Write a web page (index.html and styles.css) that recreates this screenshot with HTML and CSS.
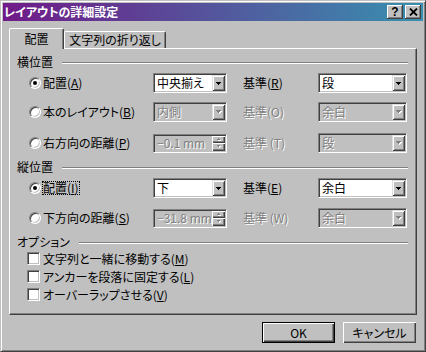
FILE: index.html
```html
<!DOCTYPE html>
<html lang="ja">
<head>
<meta charset="utf-8">
<title>レイアウトの詳細設定</title>
<link rel="stylesheet" href="styles.css">
</head>
<body>
<div class="window">
  <div class="titlebar">
    <span class="title">レイアウトの詳細設定</span>
    <div class="caption-buttons">
      <span class="cbtn help">?</span>
      <span class="cbtn close"><svg width="9" height="8" viewBox="0 0 9 8"><path d="M1 0.5L8 7.5M8 0.5L1 7.5" stroke="#000" stroke-width="1.8"/></svg></span>
    </div>
  </div>

  <div class="tabs">
    <div class="tab active">配置</div>
    <div class="tab other">文字列の折り返し</div>
  </div>

  <div class="panel">
    <div class="group-head"><span>横位置</span><div class="rule"></div></div>

    <div class="row r1">
      <span class="radio checked"></span>
      <span class="label">配置(<u>A</u>)</span>
      <div class="combo"><span class="combo-text">中央揃え</span><span class="drop"><svg width="5" height="3" viewBox="0 0 5 3" shape-rendering="crispEdges"><path d="M0 0h5v1h-1v1h-1v1h-1v-1h-1v-1h-1z" fill="#000"/></svg></span></div>
      <span class="label ref">基準(<u>R</u>)</span>
      <div class="combo"><span class="combo-text">段</span><span class="drop"><svg width="5" height="3" viewBox="0 0 5 3" shape-rendering="crispEdges"><path d="M0 0h5v1h-1v1h-1v1h-1v-1h-1v-1h-1z" fill="#000"/></svg></span></div>
    </div>

    <div class="row r2">
      <span class="radio"></span>
      <span class="label">本のレイアウト(<u>B</u>)</span>
      <div class="combo disabled"><span class="combo-text dim">内側</span><span class="drop"><svg width="6" height="4" viewBox="0 0 6 4" shape-rendering="crispEdges"><path d="M1 1h5v1h-1v1h-1v1h-1v-1h-1v-1h-1z" fill="#fff"/><path d="M0 0h5v1h-1v1h-1v1h-1v-1h-1v-1h-1z" fill="#808080"/></svg></span></div>
      <span class="label ref dim">基準(O)</span>
      <div class="combo disabled"><span class="combo-text dim">余白</span><span class="drop"><svg width="6" height="4" viewBox="0 0 6 4" shape-rendering="crispEdges"><path d="M1 1h5v1h-1v1h-1v1h-1v-1h-1v-1h-1z" fill="#fff"/><path d="M0 0h5v1h-1v1h-1v1h-1v-1h-1v-1h-1z" fill="#808080"/></svg></span></div>
    </div>

    <div class="row r3">
      <span class="radio"></span>
      <span class="label">右方向の距離(<u>P</u>)</span>
      <div class="spin"><span class="combo-text dim">−0.1 mm</span><span class="spin-btns"><span class="spin-btn up"><svg width="4" height="3" viewBox="0 0 4 3" shape-rendering="crispEdges"><path d="M2 1h1v1h1v1h-3v-1h1z" fill="#fff"/><path d="M1 0h1v1h1v1h-3v-1h1z" fill="#808080"/></svg></span><span class="spin-btn down"><svg width="4" height="3" viewBox="0 0 4 3" shape-rendering="crispEdges"><path d="M1 1h3v1h-1v1h-1v-1h-1z" fill="#fff"/><path d="M0 0h3v1h-1v1h-1v-1h-1z" fill="#808080"/></svg></span></span></div>
      <span class="label ref dim">基準 (T)</span>
      <div class="combo disabled"><span class="combo-text dim">段</span><span class="drop"><svg width="6" height="4" viewBox="0 0 6 4" shape-rendering="crispEdges"><path d="M1 1h5v1h-1v1h-1v1h-1v-1h-1v-1h-1z" fill="#fff"/><path d="M0 0h5v1h-1v1h-1v1h-1v-1h-1v-1h-1z" fill="#808080"/></svg></span></div>
    </div>

    <div class="group-head h2"><span>縦位置</span><div class="rule"></div></div>

    <div class="row r4">
      <span class="radio checked"></span>
      <span class="label"><span class="focus">配置(<u>I</u>)</span></span>
      <div class="combo"><span class="combo-text">下</span><span class="drop"><svg width="5" height="3" viewBox="0 0 5 3" shape-rendering="crispEdges"><path d="M0 0h5v1h-1v1h-1v1h-1v-1h-1v-1h-1z" fill="#000"/></svg></span></div>
      <span class="label ref">基準(<u>E</u>)</span>
      <div class="combo"><span class="combo-text">余白</span><span class="drop"><svg width="5" height="3" viewBox="0 0 5 3" shape-rendering="crispEdges"><path d="M0 0h5v1h-1v1h-1v1h-1v-1h-1v-1h-1z" fill="#000"/></svg></span></div>
    </div>

    <div class="row r5">
      <span class="radio"></span>
      <span class="label">下方向の距離(<u>S</u>)</span>
      <div class="spin"><span class="combo-text dim">−31.8 mm</span><span class="spin-btns"><span class="spin-btn up"><svg width="4" height="3" viewBox="0 0 4 3" shape-rendering="crispEdges"><path d="M2 1h1v1h1v1h-3v-1h1z" fill="#fff"/><path d="M1 0h1v1h1v1h-3v-1h1z" fill="#808080"/></svg></span><span class="spin-btn down"><svg width="4" height="3" viewBox="0 0 4 3" shape-rendering="crispEdges"><path d="M1 1h3v1h-1v1h-1v-1h-1z" fill="#fff"/><path d="M0 0h3v1h-1v1h-1v-1h-1z" fill="#808080"/></svg></span></span></div>
      <span class="label ref dim">基準 (W)</span>
      <div class="combo disabled"><span class="combo-text dim">余白</span><span class="drop"><svg width="6" height="4" viewBox="0 0 6 4" shape-rendering="crispEdges"><path d="M1 1h5v1h-1v1h-1v1h-1v-1h-1v-1h-1z" fill="#fff"/><path d="M0 0h5v1h-1v1h-1v1h-1v-1h-1v-1h-1z" fill="#808080"/></svg></span></div>
    </div>

    <div class="group-head h3"><span>オプション</span><div class="rule"></div></div>

    <div class="check-row c1"><span class="check"></span><span>文字列と一緒に移動する(<u>M</u>)</span></div>
    <div class="check-row"><span class="check"></span><span>アンカーを段落に固定する(<u>L</u>)</span></div>
    <div class="check-row"><span class="check"></span><span>オーバーラップさせる(<u>V</u>)</span></div>
  </div>

  <div class="actions">
    <div class="btn default">OK</div>
    <div class="btn">キャンセル</div>
  </div>
</div>
</body>
</html>
```

FILE: styles.css
```css
* { box-sizing: border-box; }
html, body { margin: 0; padding: 0; }
body {
  width: 426px;
  height: 352px;
  overflow: hidden;
  background: #c0c0c0;
  font-family: "Noto Sans CJK JP", "Noto Sans", sans-serif;
  font-size: 12px;
  line-height: 14px;
  font-feature-settings: "palt";
  color: #000;
}
u { text-underline-offset: 1px; }

.window {
  width: 426px;
  height: 352px;
  border: 1px solid;
  border-color: #c0c0c0 #404040 #404040 #c0c0c0;
  box-shadow: inset 1px 1px 0 #fff, inset -1px -1px 0 #808080;
  padding: 2px;
  display: flex;
  flex-direction: column;
}

.titlebar {
  flex: none;
  height: 18px;
  display: flex;
  align-items: center;
  padding-left: 1px;
  background: linear-gradient(to right, #701a88, #3890b0);
  color: #fff;
}
.title { font-weight: bold; white-space: nowrap; }
.caption-buttons { margin-left: auto; margin-right: 2px; display: flex; gap: 2px; }
.cbtn {
  width: 16px;
  height: 14px;
  background: #c0c0c0;
  color: #000;
  display: flex;
  align-items: center;
  justify-content: center;
  box-shadow: inset -1px -1px 0 #404040, inset 1px 1px 0 #fff, inset -2px -2px 0 #808080;
}
.help {
  font-family: "Liberation Sans", sans-serif;
  font-weight: bold;
  font-size: 12px;
  line-height: 12px;
}

.tabs {
  flex: none;
  display: flex;
  align-items: flex-end;
  height: 21px;
  margin: 7px 0 0 6px;
  position: relative;
  z-index: 1;
}
.tab {
  height: 17px;
  margin-bottom: 1px;
  background: #c0c0c0;
  border-top: 1px solid #fff;
  border-left: 1px solid #fff;
  border-right: 1px solid #404040;
  box-shadow: inset -1px 0 0 #808080;
  border-radius: 2px 2px 0 0;
  display: flex;
  align-items: center;
  justify-content: center;
  white-space: nowrap;
}
.tab.active { height: 21px; margin-bottom: 0; width: 55px; }
.tab.other { width: 102px; }

.panel {
  flex: none;
  margin: -1px 0 0 6px;
  width: 408px;
  height: 267px;
  border: 1px solid;
  border-color: #fff #404040 #404040 #fff;
  box-shadow: inset -1px -1px 0 #808080;
  padding: 6px 8px 0 7px;
}

.group-head {
  height: 14px;
  display: flex;
  align-items: center;
  white-space: nowrap;
}
.group-head .rule {
  flex: 1;
  height: 2px;
  margin: 2px 0 0 9px;
  border-top: 1px solid #808080;
  border-bottom: 1px solid #fff;
}
.group-head.h2 { margin-top: 8px; }
.group-head.h3 { margin-top: 8px; }

.row {
  display: grid;
  grid-template-columns: 14px 110px 74px 16px 75px 89px;
  align-items: center;
  height: 20px;
  margin-left: 12px;
  white-space: nowrap;
}
.row.r1 { margin-top: 4px; }
.row.r2 { margin-top: 9px; }
.row.r3 { margin-top: 11px; height: 19px; }
.row.r4 { margin-top: 4px; }
.row.r5 { margin-top: 10px; height: 19px; }
.label.ref { grid-column: 5; }
.dim { color: #808080; text-shadow: 1px 1px 0 #fff; }

.focus {
  display: inline-block;
  margin-left: -1px;
  height: 14px;
  line-height: 12px;
  border: 1px dotted #000;
}

.radio {
  width: 12px;
  height: 12px;
  border-radius: 50%;
  background: #fff;
  border: 1px solid;
  border-color: #808080 #fff #fff #808080;
  box-shadow: inset 1px 1px 0 #404040, inset -1px -1px 0 #c0c0c0;
  position: relative;
}
.radio.checked::after {
  content: "";
  position: absolute;
  left: 3px;
  top: 3px;
  width: 4px;
  height: 4px;
  border-radius: 50%;
  background: #000;
}

.combo, .spin {
  height: 20px;
  display: flex;
  align-items: center;
  background: #fff;
  border: 1px solid;
  border-color: #808080 #fff #fff #808080;
  box-shadow: inset 1px 1px 0 #404040, inset -1px -1px 0 #c0c0c0;
  padding: 1px;
}
.combo.disabled, .spin { background: #c0c0c0; }
.spin { height: 19px; }
.combo-text { flex: 1; min-width: 0; padding-left: 2px; white-space: nowrap; }
.drop {
  flex: none;
  width: 13px;
  height: 16px;
  background: #c0c0c0;
  box-shadow: inset 1px 1px 0 #dfdfdf, inset -1px -1px 0 #404040, inset 2px 2px 0 #fff, inset -2px -2px 0 #808080;
  display: flex;
  align-items: center;
  justify-content: center;
}
.drop svg { display: block; }
.spin-btns {
  flex: none;
  width: 13px;
  height: 15px;
  display: flex;
  flex-direction: column;
}
.spin-btn {
  flex: 1;
  background: #c0c0c0;
  box-shadow: inset 1px 1px 0 #fff, inset -1px -1px 0 #404040, inset -2px -2px 0 #808080;
  display: flex;
  align-items: center;
  justify-content: center;
}
.spin-btn svg { display: block; }

.check-row {
  display: flex;
  align-items: center;
  gap: 3px;
  height: 13px;
  margin: 5px 0 0 10px;
  white-space: nowrap;
}
.check-row.c1 { margin-top: 3px; }
.check {
  flex: none;
  width: 13px;
  height: 13px;
  background: #fff;
  border: 1px solid;
  border-color: #808080 #fff #fff #808080;
  box-shadow: inset 1px 1px 0 #404040, inset -1px -1px 0 #c0c0c0;
}

.actions {
  flex: none;
  display: flex;
  justify-content: flex-end;
  align-items: center;
  gap: 8px;
  margin-top: 7px;
  padding-right: 7px;
}
.btn {
  width: 73px;
  height: 21px;
  background: #c0c0c0;
  display: flex;
  align-items: center;
  justify-content: center;
  box-shadow: inset 1px 1px 0 #fff, inset -1px -1px 0 #404040, inset -2px -2px 0 #808080;
}
.btn.default { border: 1px solid #000; }
```
